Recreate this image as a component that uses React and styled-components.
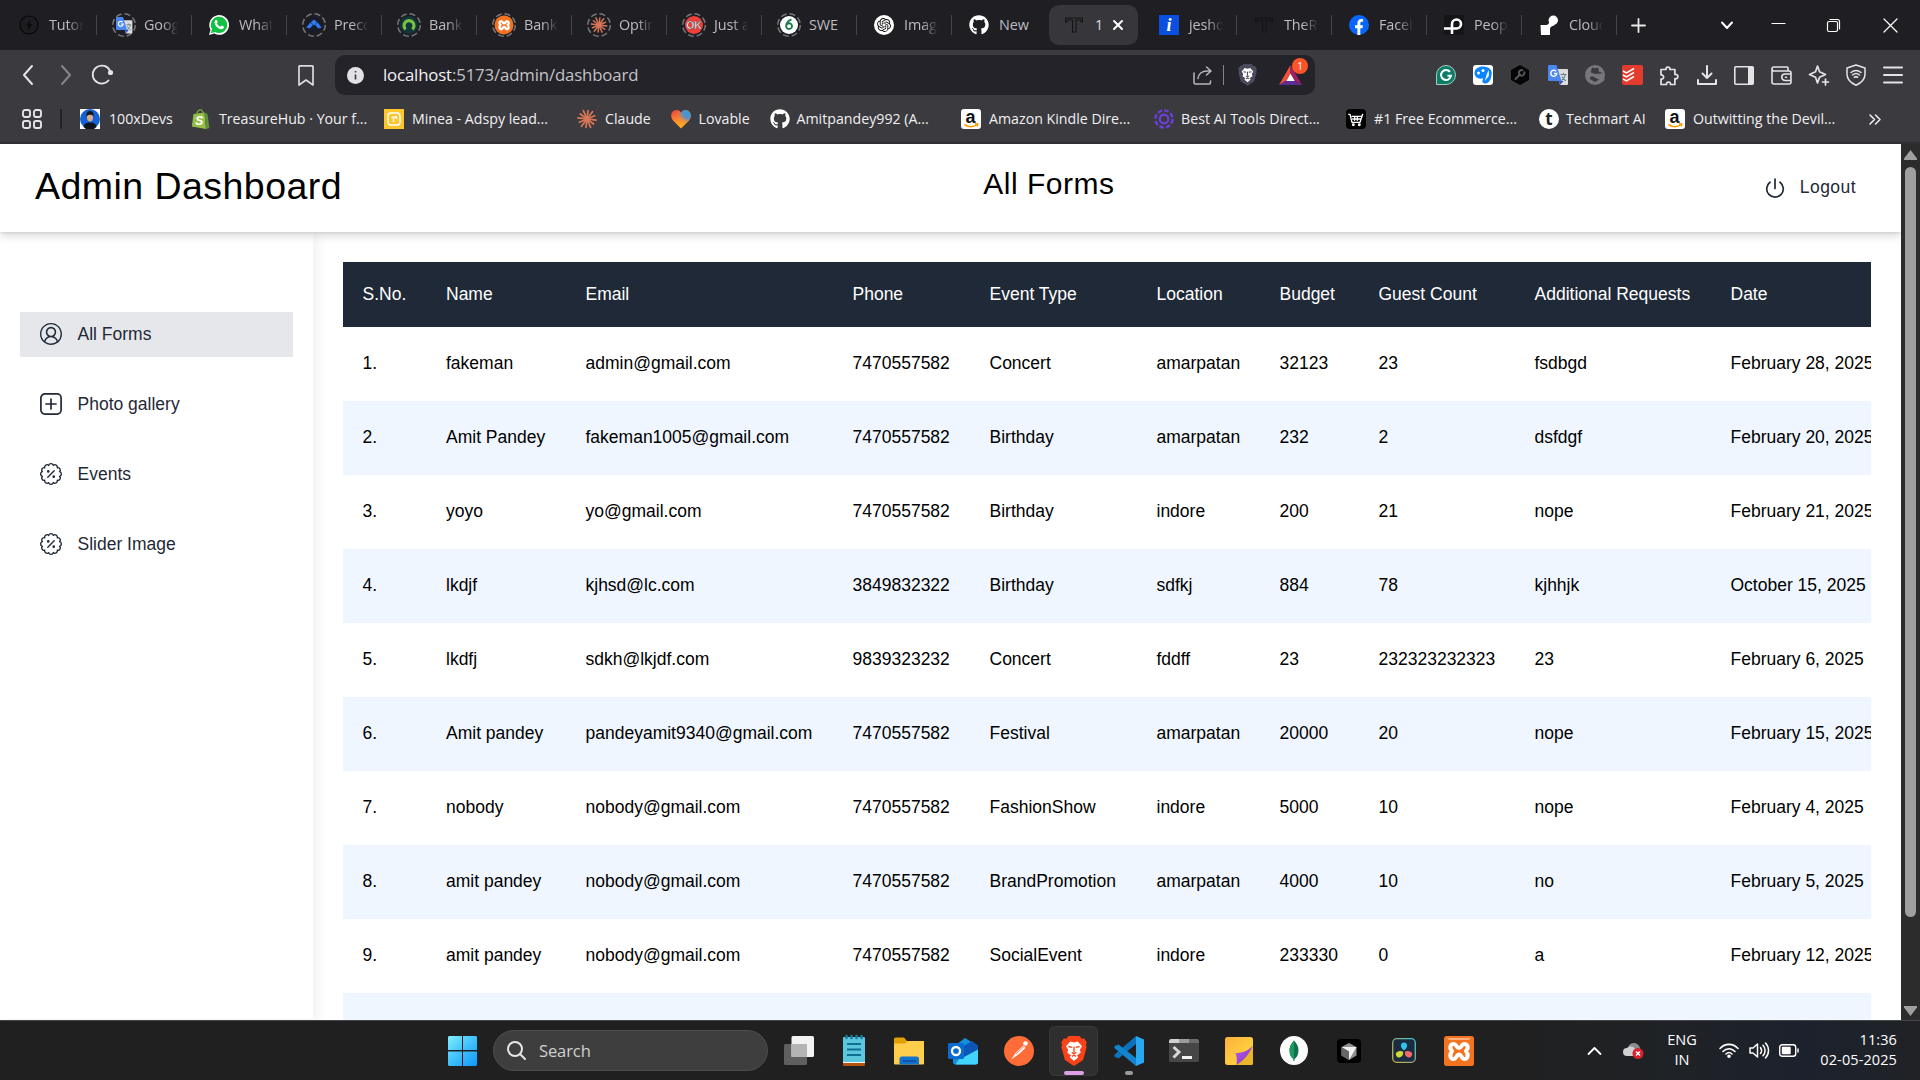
import React from "react";
import styled, { createGlobalStyle, css } from "styled-components";
import { FaGithub } from "react-icons/fa";
import { VscAccount } from "react-icons/vsc";
import { SiOpenai } from "react-icons/si";

const ui = `"Open Sans", "Noto Sans", sans-serif`;
const arial = `"Liberation Sans", Arial, sans-serif`;

const GlobalStyle = createGlobalStyle`
  * { box-sizing: border-box; }
  html, body { margin: 0; padding: 0; overflow: hidden; background: #202020; }
  svg { display: block; flex: none; overflow: visible; }
`;

const Screen = styled.div`
  width: 1920px;
  height: 1080px;
  display: flex;
  flex-direction: column;
  overflow: hidden;
  font-family: ${ui};
`;

/* ---------- browser chrome ---------- */
const TabStrip = styled.div`
  height: 50px;
  flex: none;
  display: flex;
  align-items: center;
  padding-left: 2px;
  background: #1f1e23;
  color: #bdbcc1;
`;
const Tab = styled.div`
  display: flex;
  align-items: center;
  width: 95px;
  height: 40px;
  flex: none;
  padding-left: 17px;
  gap: 8px;
  ${(p) => p.$active && css`
    width: 89px;
    margin: 0 4px 0 2px;
    padding-left: 15px;
    border-radius: 10px;
    background: #37363b;
    gap: 9px;
    color: #dddce0;
  `}
`;
const Favicon = styled.div`
  width: 20px;
  height: 20px;
  flex: none;
  display: flex;
  align-items: center;
  justify-content: center;
`;
const TabLabel = styled.span`
  width: ${(p) => p.$w || 37}px;
  padding-left: 2px;
  font-size: 14.4px;
  line-height: 22px;
  letter-spacing: -0.1px;
  white-space: nowrap;
  overflow: hidden;
  mask-image: ${(p) => (p.$solid ? "none" : "linear-gradient(90deg, #000 55%, transparent 98%)")};
`;
const TabRule = styled.i`
  width: 1px;
  height: 20px;
  margin-left: auto;
  background: ${(p) => (p.$hidden ? "transparent" : "#45444a")};
`;
const NewTab = styled.div`
  width: 42px;
  display: grid;
  place-items: center;
`;
const WindowControls = styled.div`
  margin-left: auto;
  margin-right: 1px;
  display: grid;
  grid-template-columns: 50px 52px 58px 57px;
  justify-items: center;
  align-items: center;
`;
const Toolbar = styled.div`
  height: 50px;
  flex: none;
  display: flex;
  align-items: center;
  background: #3b3a3f;
  padding: 0 9px 0 8px;
`;
const NavButtons = styled.div`
  display: grid;
  grid-template-columns: 39px 37px 36px;
  place-items: center;
`;
const BookmarkSlot = styled.div`
  margin-left: 169px;
  width: 46px;
  padding-left: 9px;
`;
const AddressBar = styled.div`
  width: 980px;
  height: 40px;
  border-radius: 10px;
  background: #242329;
  display: flex;
  align-items: center;
  padding: 0 13px 0 12px;
`;
const Url = styled.span`
  flex: 1;
  padding: 0 0 2px 19px;
  font-size: 16.8px;
  letter-spacing: -0.15px;
  color: #c3c2c7;
  b { font-weight: 400; color: #f1f1f3; }
`;
const AddressRule = styled.i`
  width: 1px;
  height: 20px;
  background: #85848a;
  margin: 0 14px 0 11px;
`;
const Rewards = styled.div`
  position: relative;
  margin-left: 22px;
`;
const RewardsBadge = styled.span`
  position: absolute;
  left: 13px;
  top: -7px;
  width: 16px;
  height: 16px;
  border-radius: 50%;
  background: #fb542b;
  color: #fff;
  font-size: 10px;
  line-height: 16px;
  text-align: center;
`;
const Extensions = styled.div`
  margin-left: auto;
  display: grid;
  grid-template-columns: repeat(13, 37.3px);
  justify-items: center;
  align-items: center;
  margin-right: -1px;
`;
const BookmarksBar = styled.div`
  height: 44px;
  flex: none;
  display: flex;
  align-items: center;
  background: #3b3a3f;
  border-bottom: 2px solid #302f34;
  padding: 0 0 4px 22px;
  color: #f0f0f2;
`;
const BookmarkRule = styled.i`
  width: 2px;
  height: 20px;
  margin: 0 18px 0 18px;
  background: #232227;
  border-radius: 1px;
`;
const Bookmark = styled.div`
  display: flex;
  align-items: center;
  gap: ${(p) => p.$gap || 8}px;
  flex: none;
  width: ${(p) => p.$w}px;
  font-size: 14.2px;
  white-space: nowrap;
`;
const BookmarkLabel = styled.span`
  padding-bottom: 2px;
`;
const Chip = styled.div`
  width: 20px;
  height: 20px;
  flex: none;
  display: grid;
  place-items: center;
  overflow: hidden;
  line-height: 1;
  background: ${(p) => p.$bg || "transparent"};
  color: ${(p) => p.$fg || "#fff"};
  border-radius: ${(p) => p.$r ?? 4}px;
  font: ${(p) => p.$font || `700 15px/20px ${arial}`};
`;

/* ---------- page ---------- */
const Viewport = styled.div`
  height: 876px;
  flex: none;
  display: flex;
  background: #fff;
  font-family: ${arial};
`;
const Page = styled.div`
  width: 1901px;
  display: flex;
  flex-direction: column;
  overflow: hidden;
`;
const Header = styled.header`
  height: 88px;
  flex: none;
  display: flex;
  justify-content: space-between;
  padding: 0 45px 0 35px;
  background: #fff;
  color: #000;
  box-shadow: 0 5px 8px rgba(0, 0, 0, 0.12), 0 1px 3px rgba(0, 0, 0, 0.1);
  z-index: 2;
`;
const Title = styled.h1`
  margin: 20px 0 0;
  font-size: 37.5px;
  line-height: 44px;
  font-weight: 400;
  letter-spacing: 0.46px;
`;
const Subtitle = styled.h2`
  margin: 22px 0 0;
  font-size: 30px;
  line-height: 36px;
  font-weight: 400;
  letter-spacing: 0.5px;
`;
const Logout = styled.div`
  display: flex;
  margin-top: 32px;
  padding-left: 9px;
  gap: 15px;
  height: 22px;
  font-size: 17.5px;
  line-height: 22px;
  letter-spacing: 0.44px;
  color: #1f2937;
  svg { margin-top: 2px; }
`;
const Body = styled.div`
  flex: 1;
  min-height: 0;
  display: flex;
`;
const Sidebar = styled.nav`
  width: 313px;
  flex: none;
  margin-bottom: 1px;
  padding: 80px 20px 0;
  display: flex;
  flex-direction: column;
  gap: 25px;
  background: #fff;
  box-shadow: 3px 4px 12px rgba(0, 0, 0, 0.07);
`;
const NavItem = styled.a`
  height: 45px;
  display: flex;
  align-items: center;
  gap: 15.5px;
  padding-left: 20px;
  padding-bottom: 1px;
  font-size: 17.5px;
  color: #1f2937;
  background: ${(p) => (p.$active ? "#e5e7eb" : "transparent")};
`;
const Main = styled.main`
  flex: 1;
  min-width: 0;
  padding: 30px 30px 0;
  overflow: hidden;
`;
const TableClip = styled.div`
  overflow: hidden;
`;
const Row = styled.div`
  display: grid;
  grid-template-columns: 83.5px 139.5px 267px 137px 167px 123px 99px 156px 196px 220px;
  width: 1588px;
  height: ${(p) => (p.$head ? 65 : 74)}px;
  align-items: center;
  padding-bottom: ${(p) => (p.$head ? 1 : 2)}px;
  font-size: 17.5px;
  color: ${(p) => (p.$head ? "#fff" : "#000")};
  background: ${(p) => (p.$head ? "#1f2937" : p.$alt ? "#eff6ff" : "#fff")};
`;
const Cell = styled.span`
  padding-left: 19.5px;
  white-space: nowrap;
`;
const Scrollbar = styled.div`
  width: 19px;
  background: #2c2c2c;
  display: flex;
  flex-direction: column;
  align-items: center;
  padding: 6px 0 4px;
`;
const Thumb = styled.div`
  width: 11px;
  height: 750px;
  border-radius: 6px;
  margin: 7px 0 auto;
  background: #9f9f9f;
`;

/* ---------- taskbar ---------- */
const Taskbar = styled.footer`
  height: 60px;
  flex: none;
  display: flex;
  align-items: center;
  padding: 0 23px 0 448px;
  border-top: 1px solid #454545;
  background: linear-gradient(90deg, #202020 0 78%, #1f2226 87%, #1c222d 94%, #202226 100%);
  color: #fff;
`;
const Search = styled.div`
  width: 275px;
  height: 41px;
  margin-left: 16px;
  border-radius: 21px;
  border: 1px solid #4d4d4d;
  background: #3e3e3e;
  display: flex;
  align-items: center;
  gap: 13px;
  padding-left: 13px;
  font-size: 16.5px;
  color: #d0d0d0;
  letter-spacing: -0.1px;
`;
const Apps = styled.div`
  display: flex;
  margin-left: 3px;
`;
const AppSlot = styled.div`
  position: relative;
  width: 49px;
  height: 50px;
  margin: 0 3px;
  border-radius: 6px;
  display: grid;
  place-items: center;
  background: ${(p) => (p.$active ? "#2f2f2f" : "transparent")};
  box-shadow: ${(p) => (p.$active ? "inset 0 0 0 1px #383838" : "none")};
`;
const RunningMark = styled.i`
  position: absolute;
  left: 50%;
  bottom: 1px;
  width: ${(p) => p.$w}px;
  height: 4px;
  margin-left: ${(p) => -p.$w / 2}px;
  border-radius: 2px;
  background: ${(p) => p.$c};
`;
const Tray = styled.div`
  margin-left: auto;
  display: flex;
  align-items: center;
  font-size: 14.5px;
  line-height: 20px;
`;
const SyncStatus = styled.div`
  margin-left: 22px;
`;
const StatusIcons = styled.div`
  display: flex;
  align-items: center;
  gap: 10px;
`;
const Lang = styled.div`
  width: 34px;
  margin: 0 20px 2px 21px;
  text-align: center;
`;
const Clock = styled.div`
  margin-left: 16px;
  margin-bottom: 2px;
  width: 82px;
  text-align: right;
  letter-spacing: 0.1px;
`;

/* ---------- drawings ---------- */
const Line = ({ w = 20, h = w, vb = "0 0 24 24", sw = 2, c = "#e4e4e7", children }) => (
  <svg width={w} height={h} viewBox={vb} fill="none" stroke={c} strokeWidth={sw} strokeLinecap="round" strokeLinejoin="round">
    {children}
  </svg>
);

const Burst = ({ s = 20 }) => (
  <svg width={s} height={s} viewBox="-12 -12 24 24" stroke="#d97757" strokeWidth="2.1" strokeLinecap="round">
    {Array.from({ length: 12 }, (_, i) => {
      const a = (i * Math.PI) / 6 + 0.12;
      const r = i % 2 ? 10 : 11;
      return <line key={i} x1="0" y1="0" x2={Math.cos(a) * r} y2={Math.sin(a) * r} />;
    })}
  </svg>
);

const Ringed = ({ children }) => (
  <svg width="24" height="24" viewBox="0 0 24 24">
    <circle cx="12" cy="12" r="11.3" fill="none" stroke="#77767c" strokeWidth="1.5" strokeDasharray="6 2.9" />
    {children}
  </svg>
);

const Translate = ({ s = 20 }) => (
  <svg width={s} height={s} viewBox="0 0 20 20">
    <path d="M8 4h11a1 1 0 0 1 1 1v14a1 1 0 0 1-1 1h-7z" fill="#dcdcdc" />
    <path d="M12.500 9.500h6M15.500 8v1.500M17.500 9.500c-.6 3-2 4.700-4 6M14 11.500c1 2 2 3.400 4 4.200" fill="none" stroke="#6b7f86" strokeWidth="1.100" />
    <path d="M12 20l3.500-4H11z" fill="#3155c8" />
    <path d="M1 0h7.500L13.500 16H1a1 1 0 0 1-1-1V1a1 1 0 0 1 1-1z" fill="#4a87f0" />
    <path d="M8 6.200A3 3 0 1 0 8.800 8.500H6" fill="none" stroke="#fff" strokeWidth="1.400" />
  </svg>
);

const WhatsApp = () => (
  <svg width="20" height="20" viewBox="0 0 20 20">
    <path d="M0 20l1.500-5.200A9.900 9.900 0 1 1 5.300 18.600z" fill="#fff" />
    <path d="M1.800 18.200l1.200-4.100a8.200 8.200 0 1 1 3 2.900z" fill="#12c143" />
    <path d="M6.700 5c.5-.4 1-.2 1.200.2l.8 1.800c.1.400-.5 1-.8 1.400.8 1.600 2 2.600 3.600 3.300.5-.5.900-1.300 1.300-1.100l1.900.9c.5.300.2 1.400-.2 1.800-2 2-5 .3-6.600-1.200C6.300 10.500 4.400 7 6.700 5z" fill="#fff" />
  </svg>
);

const ThinT = () => (
  <svg width="18" height="16" viewBox="0 0 18 16" fill="none" stroke="#141417" strokeWidth="1.100">
    <path d="M.6 1h16.800v4h-1.200l-.8-2H11v12H7.500V3H2.600l-.8 2H.6z" />
  </svg>
);

const Lion = ({ s = 24, fill = "#fb4a24", face = "#fff" }) => (
  <svg width={s} height={s * 1.15} viewBox="0 0 24 28">
    <path d="M7 0h10l2.500 2.700 2-.5L24 6l-.8 2.300.6 2.200-3.300 12L12 28l-8.500-5.500-3.300-12 .6-2.200L0 6l2.500-3.800 2 .5z" fill={fill} />
    <path d="M12 6l3.500-.9 4 4.400-2 3.400.8 2.800-3.600 2.500L16 20l-4 3.500L8 20l1.300-1.800-3.600-2.500.8-2.800-2-3.400 4-4.400z" fill={face} />
    <path d="M6.800 9.800l3.600.8M17.200 9.800l-3.600.8M12 10v5M9.800 15.300l2.200 1.300 2.200-1.300M10 19l2-1 2 1" fill="none" stroke={fill} strokeWidth="1.300" />
  </svg>
);

const Rosette = () => {
  const n = 12, r = 9.7;
  const pt = (i) => {
    const a = ((i + 0.5) * 2 * Math.PI) / n;
    return `${(12 + Math.sin(a) * r).toFixed(2)} ${(12 - Math.cos(a) * r).toFixed(2)}`;
  };
  let d = `M${pt(0)}`;
  for (let i = 1; i <= n; i++) d += `A2.600 2.600 0 0 1 ${pt(i)}`;
  return (
    <Line w={22} c="#1f2937" sw={1.500}>
      <path d={d + "z"} />
      <path d="M8.500 15.500l7-7" />
      <circle cx="9" cy="9.200" r=".7" fill="#1f2937" />
      <circle cx="15" cy="14.900" r=".7" fill="#1f2937" />
    </Line>
  );
};

const PlusSquare = () => (
  <Line w={22} vb="0 0 22 22" c="#1f2937" sw={1.700}>
    <rect x=".9" y=".9" width="20.200" height="20.200" rx="4" />
    <path d="M11 6v10M6 11h10" />
  </Line>
);

const Xampp = ({ s }) => (
  <svg width={s} height={s} viewBox="0 0 30 30">
    <rect width="30" height="30" rx="2.500" fill="#f37321" />
    <path d="M3 2h24l-2 2H5z" fill="#f9b27f" />
    <g fill="none" stroke="#fff" strokeWidth="4" strokeLinejoin="round" strokeLinecap="round">
      <path d="M11 8.500c-4-2-6.500 3-3 6.500-3.500 4.500-1 9.500 3 7.500 2-1 1.500-4 4-4s2 3 4 4c4 2 6.500-3 3-7.500 3.500-3.500 1-8.500-3-6.500-2 1-1.500 3.500-4 3.500s-2-2.500-4-3.500z" />
    </g>
  </svg>
);

const favicons = {
  bolt: (
    <svg width="20" height="20" viewBox="0 0 20 20">
      <circle cx="10" cy="10" r="9" fill="#1d1c20" stroke="#08080a" strokeWidth="1.200" />
      <path d="M12 4l-5 6.500h3L8 16l5.500-7h-3z" fill="#0a0a0b" />
    </svg>
  ),
  translate: <Ringed><g transform="translate(4 4) scale(.82)"><Translate /></g></Ringed>,
  whatsapp: <WhatsApp />,
  precc: (
    <Ringed>
      <circle cx="12" cy="12" r="8.500" fill="#181b28" />
      <path d="M4.300 14.500l4-5 2.700 2.500-3.300 3.500zM19.700 14.500l-4-5-2.700 2.500 3.300 3.500zM12 6.500l3.200 2.800L12 12.500 8.800 9.300z" fill="#2f7bf6" />
    </Ringed>
  ),
  bank: (
    <Ringed>
      <circle cx="12" cy="12" r="9" fill="#10353b" />
      <path d="M8.600 16.300A5 5 0 1 1 15.400 16.300" fill="none" stroke="#7ac142" strokeWidth="3.200" />
    </Ringed>
  ),
  xampp: (
    <Ringed>
      <circle cx="12" cy="12" r="9.500" fill="#f37321" />
      <g transform="translate(4.300 4.200) scale(.52)">
        <path d="M11 8.500c-4-2-6.500 3-3 6.500-3.500 4.500-1 9.500 3 7.500 2-1 1.500-4 4-4s2 3 4 4c4 2 6.500-3 3-7.500 3.500-3.500 1-8.500-3-6.500-2 1-1.500 3.500-4 3.500s-2-2.500-4-3.500z" fill="none" stroke="#fff" strokeWidth="4.500" />
      </g>
    </Ringed>
  ),
  burst: <Ringed><g transform="translate(3.500 3.500)"><Burst s={17} /></g></Ringed>,
  ok: (
    <Ringed>
      <circle cx="12" cy="12" r="9" fill="#f0403c" />
      <text x="12" y="16" textAnchor="middle" fontFamily="Liberation Sans, sans-serif" fontWeight="700" fontSize="10.500" fill="#fff" stroke="#333" strokeWidth=".4">OK</text>
    </Ringed>
  ),
  six: (
    <Ringed>
      <circle cx="12" cy="12" r="9" fill="#fff" />
      <path d="M14.500 6.500c-3 .5-5.300 3.500-5.300 6.500a2.900 2.900 0 1 0 2.900-2.800c-1.200 0-2 .7-2.500 1.500" fill="none" stroke="#1f7a4d" strokeWidth="1.900" />
    </Ringed>
  ),
  openai: <Chip $bg="#fff" $fg="#111" $r={10}><SiOpenai size={14} /></Chip>,
  github: <FaGithub size={20} color="#fff" />,
  thin: <ThinT />,
  info: <Chip $bg="#0b4fe0" $r={0} $font={`italic 700 18px/19px "Liberation Serif", serif`}>i</Chip>,
  facebook: (
    <svg width="20" height="20" viewBox="0 0 20 20">
      <circle cx="10" cy="10" r="10" fill="#0866ff" />
      <path d="M8.400 20v-6.800H6v-3h2.400V8.500C8.400 5.600 9.700 4 12.400 4c.8 0 1.400.1 1.700.2v2.600h-1.300c-1.200 0-1.500.6-1.500 1.700v1.700h2.700l-.5 3h-2.200V20z" fill="#fff" />
    </svg>
  ),
  peop: (
    <svg width="20" height="20" viewBox="0 0 20 20">
      <rect width="20" height="20" rx="3" fill="#151517" />
      <path d="M0 13.500h8M8 19V9a4.500 4.500 0 1 1 4.500 4.500H8" fill="none" stroke="#fff" strokeWidth="2.600" />
    </svg>
  ),
  cloud: (
    <svg width="20" height="20" viewBox="0 0 20 20" fill="#fff">
      <circle cx="14.300" cy="5.300" r="4.700" />
      <path d="M1.500 10H7c1.800 0 3-1 3.400-4l5.600 4c-2 1-4.500 1-5 4v6h-9z" />
    </svg>
  ),
};

const tabs = [
  ["bolt", "Tutori"], ["translate", "Google"], ["whatsapp", "Whats"], ["precc", "Precon"],
  ["bank", "Banki"], ["xampp", "Banki"], ["burst", "Optimi"], ["ok", "Just a"],
  ["six", "SWE", true], ["openai", "Image"], ["github", "New", true], ["thin", "1", true],
  ["info", "jeshoo"], ["thin", "TheRo"], ["facebook", "Facebo"], ["peop", "People"], ["cloud", "Cloud"],
];

const AmazonMark = () => (
  <svg width="20" height="20" viewBox="0 0 20 20">
    <text x="9.500" y="13.500" textAnchor="middle" fontFamily="Liberation Sans, sans-serif" fontWeight="700" fontSize="18" fill="#111">a</text>
    <path d="M3.500 15.500c4 2.800 9 2.800 12.500 0M14 14.800l2.700.1-.4 2.400" fill="none" stroke="#ff9900" strokeWidth="1.600" />
  </svg>
);
const amazon = <Chip $bg="#fff" $fg="#111" $r={3}><AmazonMark /></Chip>;

const bookmarks = [
  ["100xDevs", 111, (
    <svg width="20" height="20" viewBox="0 0 20 20">
      <rect width="20" height="20" fill="#fff" />
      <circle cx="10" cy="10" r="10" fill="#1262d4" />
      <path d="M3.500 18c.5-3.500 3-4.500 6.500-4.500s6 1 6.500 4.500L14 20H6z" fill="#101420" />
      <ellipse cx="10" cy="8.200" rx="3" ry="4.300" fill="#dba98a" />
      <path d="M6.600 7.500C6 3 8 2 10 2s4 1 3.400 5.500C12.500 5.500 8 5 6.600 7.500z" fill="#161616" />
    </svg>
  ), 9],
  ["TreasureHub · Your f...", 193, (
    <svg width="20" height="20" viewBox="0 0 20 20">
      <path d="M2.500 5l11-1.500L15 20 .8 17.500z" fill="#95bf47" />
      <path d="M13.500 3.500l3 1.500L18.500 19 15 20z" fill="#5e8e3e" />
      <path d="M5.500 6C6 2.500 8 .8 9.500.8S12 2.500 12.200 5" fill="none" stroke="#7da83b" strokeWidth="1.200" />
      <text x="8.200" y="16" textAnchor="middle" fontFamily="Liberation Sans, sans-serif" fontStyle="italic" fontWeight="700" fontSize="12" fill="#fff">S</text>
    </svg>
  )],
  ["Minea - Adspy lead...", 193, (
    <svg width="20" height="20" viewBox="0 0 20 20">
      <rect width="20" height="20" fill="#fcc62d" />
      <g fill="none" stroke="#fff" strokeWidth="1.400"><rect x="4" y="4" width="12" height="12" rx="3" /><path d="M7.500 8.500c2-1 3.500-1 5 .5M9.500 13V9M12.500 7v3" /></g>
    </svg>
  )],
  ["Claude", 93.5, <Burst key="c" />],
  ["Lovable", 99, (
    <svg width="20" height="20" viewBox="0 0 20 20">
      <defs>
        <linearGradient id="heart" x1=".2" y1="0" x2=".45" y2="1"><stop offset="0" stopColor="#f2443a" /><stop offset=".55" stopColor="#fb8a2e" /><stop offset="1" stopColor="#ffb31f" /></linearGradient>
        <radialGradient id="heartBlue" cx=".88" cy=".15" r=".62"><stop offset="0" stopColor="#2f9bd6" /><stop offset=".5" stopColor="#5f8fc0" /><stop offset="1" stopColor="#f68b3c" stopOpacity="0" /></radialGradient>
      </defs>
      {["heart", "heartBlue"].map((g) => (
        <path key={g} d="M10 19.500L2 11.500C-1.500 7 .5 1 5.200 1 7.600 1 9.200 2.300 10 4c.8-1.700 2.400-3 4.800-3 4.700 0 6.700 6 3.200 10.500z" fill={`url(#${g})`} />
      ))}
    </svg>
  )],
  ["Amitpandey992 (A...", 191.5, <FaGithub key="g" size={20} color="#fff" />, 7],
  ["Amazon Kindle Dire...", 193, amazon],
  ["Best AI Tools Direct...", 192, (
    <svg width="20" height="20" viewBox="0 0 20 20" fill="none" stroke="#6b3fe0">
      <circle cx="10" cy="10" r="8.600" strokeWidth="2.400" strokeDasharray="4.600 2.150" />
      <circle cx="10" cy="10" r="4.300" strokeWidth="2.200" />
    </svg>
  ), 7],
  ["#1 Free Ecommerce...", 193, (
    <Chip key="cart" $bg="#000" $r={4}>
      <Line w={16} c="#fff" sw={2}><path d="M1 5l2 0 3 12h12l4-12M6 8h14M7 12h12M10 8v6M14 8v6" /><circle cx="8" cy="20.500" r="1.200" /><circle cx="17" cy="20.500" r="1.200" /></Line>
    </Chip>
  )],
  ["Techmart AI", 126, <Chip key="t" $bg="#fff" $fg="#222" $r={10} $font={`700 17px/18px ${ui}`}>t</Chip>, 7],
  ["Outwitting the Devil...", 204, amazon],
];

const extensions = [
  <svg key="g" width="20" height="20" viewBox="0 0 20 20"><path d="M.5 19.500V10A9.500 9.500 0 1 1 10 19.500z" fill="#0d7d68" stroke="#a9c9c3" /><path d="M14 6.800A5 5 0 1 0 15 10.700H11.500" fill="none" stroke="#fff" strokeWidth="2" /></svg>,
  <svg key="p" width="20" height="20" viewBox="0 0 20 20"><rect width="20" height="20" rx="3" fill="#fff" /><path d="M10 1.500c5 0 8.700 2.800 8.700 6 0 5-1.700 11-6.700 11-3 0-3-3-1.800-5.500C6 15 1.500 12 1.500 8s4-6.500 8.500-6.500z" fill="#0b84ff" /><g fill="#fff"><circle cx="5.500" cy="8" r="1.500" /><circle cx="10" cy="5.500" r="1.500" /><path d="M14 8.500l1.800-3.500v6l-4 5z" /></g></svg>,
  <svg key="h" width="20" height="20" viewBox="0 0 20 20"><path d="M10 0l9 5v10l-9 5-9-5V5z" fill="#050505" /><path d="M5.500 14l4.500-4.500M14.300 7.200a2.800 2.800 0 1 1-2-2" fill="none" stroke="#57565a" strokeWidth="2" strokeLinecap="round" /></svg>,
  <Translate key="t" />,
  <svg key="s" width="20" height="20" viewBox="0 0 20 20"><circle cx="10" cy="10" r="10" fill="#77767a" /><path d="M3.500 8h13M6.500 7.500L7.500 3.500q2.500 1 5 0l1 4z" stroke="#3b3a3f" strokeWidth="1.600" fill="#3b3a3f" /><path d="M5 12c3-1.500 7-1.500 10 0v2l-5 3-5-3z" fill="#3b3a3f" /><path d="M1 6.500l18 9" stroke="#77767a" strokeWidth="3" /></svg>,
  <svg key="d" width="21" height="20" viewBox="0 0 21 20"><rect width="21" height="20" rx="2" fill="#e33b2e" /><g fill="none" stroke="#fff" strokeWidth="1.500"><path d="M1 6l3.500 2L12 3.500M1 10l3.500 2L12 7.500M1 14l3.500 2L12 11.500" /></g></svg>,
  <Line key="z" w={21} vb="0 0 21 21" sw={1.700}><path d="M2 4.500h5c-.8-3.300 4.600-3.300 3.900 0h5v5c4-.8 4 5 0 4.200V19.500h-4.400c.5-3.200-4.400-3.200-4 0H2v-5.300c3.500.4 3.500-4.700 0-4.200z" /></Line>,
  <Line key="dl" w={20} vb="0 0 20 20" sw={2}><path d="M10 1v12M5.500 8.500L10 13l4.500-4.500M1 15v4h18v-4" /></Line>,
  <svg key="sb" width="20" height="19" viewBox="0 0 20 19"><rect x=".8" y=".8" width="18.400" height="17.400" rx="1" fill="none" stroke="#e4e4e7" strokeWidth="1.600" /><path d="M14 1h5.200v17H14z" fill="#e4e4e7" /></svg>,
  <Line key="w" w={21} h={19} vb="0 0 21 19" sw={1.600}><path d="M17 4.500V2a1 1 0 0 0-1-1H3a2 2 0 0 0 0 4h15a2 2 0 0 1 2 2v9a2 2 0 0 1-2 2H3a2 2 0 0 1-2-2V3M20 8h-6a3 3 0 0 0 0 6.500h6M14.500 11.200h1" /></Line>,
  <Line key="l" w={21} h={21} vb="0 0 21 21" sw={1.700}><path d="M9.500 1l2 5.800 6 2.700-6 2.700-2 5.800-2-5.800-6-2.700 6-2.700z" /><path d="M17.500 14v6M14.500 17h6" /></Line>,
  <Line key="v" w={20} h={22} vb="0 0 20 22" sw={1.500}><path d="M10 1l9 3v6c0 5.500-4 9-9 11.200C5 19 1 15.500 1 10V4z" /><path d="M5 8.500c3-2.500 7-2.500 10 0M6.500 11c2-1.700 5-1.700 7 0M8.300 13.300c1-.8 2.400-.8 3.400 0" /></Line>,
  <Line key="m" w={20} h={18} vb="0 0 20 18" sw={2}><path d="M1 1.500h18M1 9h18M1 16.500h18" /></Line>,
];

const columns = ["S.No.", "Name", "Email", "Phone", "Event Type", "Location", "Budget", "Guest Count", "Additional Requests", "Date"];
const rows = [
  ["1.", "fakeman", "admin@gmail.com", "7470557582", "Concert", "amarpatan", "32123", "23", "fsdbgd", "February 28, 2025"],
  ["2.", "Amit Pandey", "fakeman1005@gmail.com", "7470557582", "Birthday", "amarpatan", "232", "2", "dsfdgf", "February 20, 2025"],
  ["3.", "yoyo", "yo@gmail.com", "7470557582", "Birthday", "indore", "200", "21", "nope", "February 21, 2025"],
  ["4.", "lkdjf", "kjhsd@lc.com", "3849832322", "Birthday", "sdfkj", "884", "78", "kjhhjk", "October 15, 2025"],
  ["5.", "lkdfj", "sdkh@lkjdf.com", "9839323232", "Concert", "fddff", "23", "232323232323", "23", "February 6, 2025"],
  ["6.", "Amit pandey", "pandeyamit9340@gmail.com", "7470557582", "Festival", "amarpatan", "20000", "20", "nope", "February 15, 2025"],
  ["7.", "nobody", "nobody@gmail.com", "7470557582", "FashionShow", "indore", "5000", "10", "nope", "February 4, 2025"],
  ["8.", "amit pandey", "nobody@gmail.com", "7470557582", "BrandPromotion", "amarpatan", "4000", "10", "no", "February 5, 2025"],
  ["9.", "amit pandey", "nobody@gmail.com", "7470557582", "SocialEvent", "indore", "233330", "0", "a", "February 12, 2025"],
  [],
];

const apps = [
  <svg key="tv" width="30" height="29" viewBox="0 0 30 29"><rect x="0" y="8" width="23" height="21" rx="1.500" fill="#5f5f5f" /><rect x="7.500" y="0" width="22.500" height="21" rx="1.500" fill="#f2f2f2" /><rect x="7.500" y="8" width="15.500" height="13" fill="#b4b4b4" /></svg>,
  <svg key="np" width="22" height="31" viewBox="0 0 22 31"><rect y="24" width="22" height="7" rx="1.500" fill="#b5530f" /><rect y="24" width="22" height="4" fill="#f5f5f5" /><rect y="2" width="22" height="25" rx="1" fill="#5cc6de" /><path d="M4 9h14M4 14.500h14M4 20h14" stroke="#0f6f92" strokeWidth="2" /><path d="M3.500 1v2M8.500 1v2M13.500 1v2M18.500 1v2" stroke="#157b9c" strokeWidth="2.500" strokeLinecap="round" /></svg>,
  <svg key="fo" width="30" height="28" viewBox="0 0 30 28"><path d="M0 2a1.500 1.500 0 0 1 1.500-1.500H10l3 3.500h15.500A1.500 1.500 0 0 1 30 5.500V14H0z" fill="#e2a000" /><path d="M0 6.500h11l2.500-2.500H30v22.500a1 1 0 0 1-1 1H1a1 1 0 0 1-1-1z" fill="#ffce4a" /><path d="M5.500 27.500V22a2.500 2.500 0 0 1 2.500-2.500h14.500A2.500 2.500 0 0 1 25 22v5.500z" fill="#1173cf" /><path d="M9 24h12.500" stroke="#0a4b93" strokeWidth="1.500" /></svg>,
  <svg key="ou" width="31" height="28" viewBox="0 0 31 28"><path d="M5 10L17 1l13 8v16a2.500 2.500 0 0 1-2.500 2.500h-20A2.500 2.500 0 0 1 5 25z" fill="#1490df" /><path d="M16 15l14-6v16a2.500 2.500 0 0 1-2.500 2.500h-20z" fill="#43d4fb" /><path d="M14 10l10-6 6 4.500v4L16 20z" fill="#0a55b5" /><rect y="6" width="16" height="16" rx="1.500" fill="#0b6cd0" /><circle cx="8" cy="14" r="4" fill="none" stroke="#fff" strokeWidth="2.300" /></svg>,
  <svg key="po" width="30" height="30" viewBox="0 0 30 30"><circle cx="15" cy="15" r="15" fill="#ff6c37" /><circle cx="21.500" cy="7.500" r="2.300" fill="#fff" /><path d="M19.500 9.500l2 2.500-6.500 6-8 5.500 5-7z" fill="#fff" /><path d="M12 18l8-7.500" stroke="#ff6c37" strokeWidth=".8" /></svg>,
  <Lion key="br" s={26} fill="#fb4218" />,
  <svg key="vs" width="30" height="30" viewBox="0 0 30 30"><path d="M22 0v8L4.500 22.500 1 21c-1-.8-1-1.800 0-2.700z" fill="#0c72bd" /><path d="M22 30v-8L4.500 8.500 1 10c-1 .8-1 1.500 0 2.400z" fill="#1183cf" /><path d="M22 0l8 3.500v23L22 30z" fill="#27a8f0" /></svg>,
  <svg key="te" width="30" height="23" viewBox="0 0 30 23"><rect width="30" height="23" rx="1.500" fill="#474747" /><path d="M1.500 0H10v4H0V1.500z" fill="#cfcfcf" /><path d="M10 0h10v4H10z" fill="#9c9c9c" /><path d="M20 0h8.500L30 1.500V4H20z" fill="#6c6c6c" /><path d="M4.500 8l5.500 5-5.500 5.500" fill="none" stroke="#d6d6d6" strokeWidth="3" /><path d="M13 18.500h10" stroke="#f2f2f2" strokeWidth="3" /></svg>,
  <svg key="st" width="28" height="28" viewBox="0 0 28 28"><defs><linearGradient id="note" x1="0" y1="0" x2="1" y2="1"><stop offset="0" stopColor="#fdb03f" /><stop offset="1" stopColor="#ffdf3e" /></linearGradient><linearGradient id="curl" x1="0" y1="0" x2="1" y2="1"><stop offset="0" stopColor="#c05af0" /><stop offset="1" stopColor="#7a38b8" /></linearGradient></defs><rect width="28" height="28" rx="2.500" fill="url(#note)" /><path d="M11.500 28L28 9v17a2 2 0 0 1-2 2z" fill="#eab528" /><path d="M11.500 28c.5-4.500.5-8-1-12 7 0 13-2 17-7.500C25 17 18 24 11.500 28z" fill="url(#curl)" /></svg>,
  <svg key="mo" width="28" height="29" viewBox="0 0 28 29"><ellipse cx="14" cy="14.500" rx="14" ry="14.500" fill="#fbfbfb" /><path d="M14 4.500c3 3.500 4.500 6 4.500 10 0 4.500-2 7-4 8.500V25h-1v-2c-2-1.500-4-4-4-8.500 0-4 1.500-6.500 4.500-10z" fill="#11714a" /><path d="M14 4.500V25h-.5v-2c-2-1.500-4-4-4-8.500 0-4 1.500-6.500 4.500-10z" fill="#1a9a63" /></svg>,
  <svg key="cu" width="24" height="24" viewBox="0 0 24 24"><rect width="24" height="24" rx="4" fill="#000" /><path d="M12 4l7.500 4v8.500L12 21l-7.500-4.500V8z" fill="#909090" /><path d="M4.500 8h15L12 21v-8.500z" fill="#efefef" /><path d="M4.500 8L12 12.500V21l-7.500-4.500z" fill="#666" /></svg>,
  <svg key="dv" width="24" height="25" viewBox="0 0 24 25"><defs><linearGradient id="resolveEdge" x1="1" y1="0" x2="0" y2="1"><stop offset="0" stopColor="#3cc7cf" /><stop offset=".6" stopColor="#9aa874" /><stop offset="1" stopColor="#c9b53a" /></linearGradient></defs><rect x=".7" y=".7" width="22.600" height="23.600" rx="4" fill="#1c2c40" stroke="url(#resolveEdge)" strokeWidth="1.300" /><path d="M12 12.500c-2.500-2-3.300-3.500-3-5a3 3 0 0 1 6 0c.3 1.500-.5 3-3 5z" fill="#2fc3ee" /><path d="M11 13.500c.5 3-.5 5-2.500 5.500a3 3 0 0 1-3-5.200c1.500-1.200 3.500-1.100 5.500-.3z" fill="#cfdc33" /><path d="M13 13.500c-.5 3 .5 5 2.500 5.500a3 3 0 0 0 3-5.200c-1.500-1.200-3.500-1.100-5.500-.3z" fill="#f06a6a" /></svg>,
  <Xampp key="xa" s={30} />,
];

function BrowserChrome() {
  return (
    <>
      <TabStrip>
        {tabs.map(([icon, label, solid], i) => {
          const active = i === 11;
          return (
            <Tab key={i} $active={active}>
              <Favicon>{favicons[icon]}</Favicon>
              <TabLabel $solid={solid} $w={active ? 11 : 37}>{label}</TabLabel>
              {active
                ? <Line w={10} vb="0 0 10 10" c="#fff" sw={2}><path d="M1 1l8 8M9 1L1 9" /></Line>
                : <TabRule $hidden={i === 10} />}
            </Tab>
          );
        })}
        <NewTab><Line w={13} vb="0 0 13 13" c="#e8e8ea" sw={1.800}><path d="M6.500 0v13M0 6.500h13" /></Line></NewTab>
        <WindowControls>
          <Line w={12} h={8} vb="0 0 12 8" c="#fff" sw={2}><path d="M1 1.500L6 7l5-5.500" /></Line>
          <Line w={13} h={4} vb="0 0 13 4" c="#fff" sw={1.200}><path d="M0 .5h13" /></Line>
          <Line w={13} vb="0 0 13 13" c="#fff" sw={1.200}><rect x=".5" y="2.500" width="10" height="10" rx="1.500" /><path d="M3 .5h7.500a2 2 0 0 1 2 2V10" /></Line>
          <Line w={13} vb="0 0 13 13" c="#fff" sw={1.200}><path d="M0 0l13 13M13 0L0 13" /></Line>
        </WindowControls>
      </TabStrip>
      <Toolbar>
        <NavButtons>
          <Line w={10} h={18} vb="0 0 10 18" sw={2}><path d="M9 0L1 9l8 9" /></Line>
          <Line w={10} h={18} vb="0 0 10 18" c="#86858a" sw={2}><path d="M1 0l8 9-8 9" /></Line>
          <Line w={21} h={20} vb="0 0 21 20" sw={1.800}><path d="M16.500 15.500A9 9 0 1 1 18 6" /><circle cx="18.500" cy="7.500" r="1.700" fill="#e4e4e7" /></Line>
        </NavButtons>
        <BookmarkSlot>
          <Line w={16} h={21} vb="0 0 16 21" c="#dcdce0" sw={1.700}><path d="M1 1.500A.8.8 0 0 1 1.800.8h12.400a.8.8 0 0 1 .8.700V20l-7-5-7 5z" /></Line>
        </BookmarkSlot>
        <AddressBar>
          <svg width="17" height="17" viewBox="0 0 17 17"><circle cx="8.500" cy="8.500" r="8.500" fill="#e2e2e6" /><path d="M8.500 7.500v5M8.500 4v1.600" stroke="#3a393e" strokeWidth="1.600" /></svg>
          <Url><b>localhost</b>:5173/admin/dashboard</Url>
          <Line w={19} h={19} vb="0 0 19 19" c="#b9b8bd" sw={1.500}><path d="M1 7v9.500a1.500 1.500 0 0 0 1.500 1.500H16a1.500 1.500 0 0 0 1.500-1.500V15M5 12.500C5.500 8 9 5 14 5h3.500M13.500 1l4.500 4-4.500 4" /></Line>
          <AddressRule />
          <Lion s={19} fill="#4b4b5e" />
          <Rewards>
            <svg width="23" height="20" viewBox="0 0 23 20"><path d="M11.500 0L0 20l7.500-4.500L11.500 9z" fill="#f0503a" /><path d="M11.500 0L23 20l-7.500-4.500L11.500 9z" fill="#9e1f63" /><path d="M0 20h23l-7.500-4.500h-8z" fill="#5b2d91" /><path d="M11.500 8.500l4.200 7.500H7.300z" fill="#fff" /></svg>
            <RewardsBadge>1</RewardsBadge>
          </Rewards>
        </AddressBar>
        <Extensions>{extensions}</Extensions>
      </Toolbar>
      <BookmarksBar>
        <Line w={20} vb="0 0 20 20" sw={1.900}><rect x="1" y="1" width="7" height="7" rx="2" /><rect x="12" y="1" width="7" height="7" rx="2" /><rect x="1" y="12" width="7" height="7" rx="2" /><rect x="12" y="12" width="7" height="7" rx="2" /></Line>
        <BookmarkRule />
        {bookmarks.map(([label, w, icon, gap]) => (
          <Bookmark key={label} $w={w} $gap={gap}>{icon}<BookmarkLabel>{label}</BookmarkLabel></Bookmark>
        ))}
        <Line w={12} h={9} vb="0 0 12 9" sw={1.500} c="#f0f0f2"><path d="M1 0l4.500 4.500L1 9M6.500 0L11 4.500 6.500 9" /></Line>
      </BookmarksBar>
    </>
  );
}

function AdminPage() {
  return (
    <Viewport>
      <Page>
        <Header>
          <Title>Admin Dashboard</Title>
          <Subtitle>All Forms</Subtitle>
          <Logout>
            <Line w={20} h={22} vb="0 0 20 22" c="#1f2937" sw={1.700}><path d="M10 1v9.500M5 4.200a8.300 8.300 0 1 0 10 0" /></Line>
            Logout
          </Logout>
        </Header>
        <Body>
          <Sidebar>
            <NavItem $active><VscAccount size={22} />All Forms</NavItem>
            <NavItem><PlusSquare />Photo gallery</NavItem>
            <NavItem><Rosette />Events</NavItem>
            <NavItem><Rosette />Slider Image</NavItem>
          </Sidebar>
          <Main>
            <TableClip>
              <Row $head>{columns.map((c) => <Cell key={c}>{c}</Cell>)}</Row>
              {rows.map((r, i) => (
                <Row key={i} $alt={i % 2 === 1}>{r.map((c, j) => <Cell key={j}>{c}</Cell>)}</Row>
              ))}
            </TableClip>
          </Main>
        </Body>
      </Page>
      <Scrollbar>
        <svg width="13" height="10" viewBox="0 0 13 10"><path d="M6.500 0L13 8.500V10H0V8.500z" fill="#9f9f9f" /></svg>
        <Thumb />
        <svg width="13" height="10" viewBox="0 0 13 10"><path d="M6.500 10L13 1.500V0H0v1.500z" fill="#9f9f9f" /></svg>
      </Scrollbar>
    </Viewport>
  );
}

function SystemTaskbar() {
  return (
    <Taskbar>
      <svg width="29" height="30" viewBox="0 0 29 30">
        <defs><linearGradient id="win" gradientUnits="userSpaceOnUse" x1="0" y1="0" x2="29" y2="30"><stop offset="0" stopColor="#7ff0fe" /><stop offset=".5" stopColor="#40c0fc" /><stop offset="1" stopColor="#0f98fa" /></linearGradient></defs>
        <path d="M1 0h13v14H0V1zM15 0h13l1 1v13H15zM0 15.500h14V30H1l-1-1zM15 15.500h14V29l-1 1H15z" fill="url(#win)" />
      </svg>
      <Search>
        <Line w={19} h={19} vb="0 0 19 19" c="#e6e6e6" sw={2}><circle cx="8" cy="8" r="7" /><path d="M13.200 13.200L18 18" /></Line>
        Search
      </Search>
      <Apps>
        {apps.map((icon, i) => (
          <AppSlot key={i} $active={i === 5}>
            {icon}
            {i === 5 && <RunningMark $w={20} $c="#dc9fe6" />}
            {i === 6 && <RunningMark $w={8} $c="#9a9a9a" />}
          </AppSlot>
        ))}
      </Apps>
      <Tray>
        <Line w={13} h={8} vb="0 0 13 8" c="#fff" sw={1.800}><path d="M.5 7L6.500 1l6 6" /></Line>
        <SyncStatus>
          <svg width="21" height="17" viewBox="0 0 21 17">
            <path d="M5 6c1-6 10-7 12 0l1 6H6z" fill="#8d8d8d" /><path d="M4 14a4 4 0 0 1 0-8c4-3 8-1 9 3v5z" fill="#d0d0d0" />
            <circle cx="15" cy="11.500" r="5.500" fill="#d8202f" /><path d="M13 9.500l4 4M17 9.500l-4 4" stroke="#fff" strokeWidth="1.500" />
          </svg>
        </SyncStatus>
        <Lang>ENG IN</Lang>
        <StatusIcons>
          <Line w={20} h={15} vb="0 0 20 15" c="#fff" sw={1.600}><path d="M1 5.500c5-5.500 13-5.500 18 0M4 8.500c3.500-3.700 8.500-3.700 12 0M7 11c1.800-1.800 4.200-1.800 6 0" /><circle cx="10" cy="13.300" r="1" fill="#fff" /></Line>
          <Line w={20} h={17} vb="0 0 20 17" c="#fff" sw={1.500}><path d="M1 6v5h3l4.500 4V2L4 6zM11.500 5.500c1.300 1.800 1.300 4.200 0 6M14 3.200c2.800 3 2.800 7.600 0 10.600M16.500 1c4 4.200 4 10.800 0 15" /></Line>
          <Line w={20} h={13} vb="0 0 20 13" c="#fff" sw={1.400}><rect x=".7" y=".7" width="16" height="11.600" rx="2.500" /><rect x="3.500" y="3.500" width="7.500" height="6" fill="#fff" /><path d="M19 5v3" /></Line>
        </StatusIcons>
        <Clock>11:36<br />02-05-2025</Clock>
      </Tray>
    </Taskbar>
  );
}

export default function App() {
  return (
    <Screen>
      <GlobalStyle />
      <BrowserChrome />
      <AdminPage />
      <SystemTaskbar />
    </Screen>
  );
}
